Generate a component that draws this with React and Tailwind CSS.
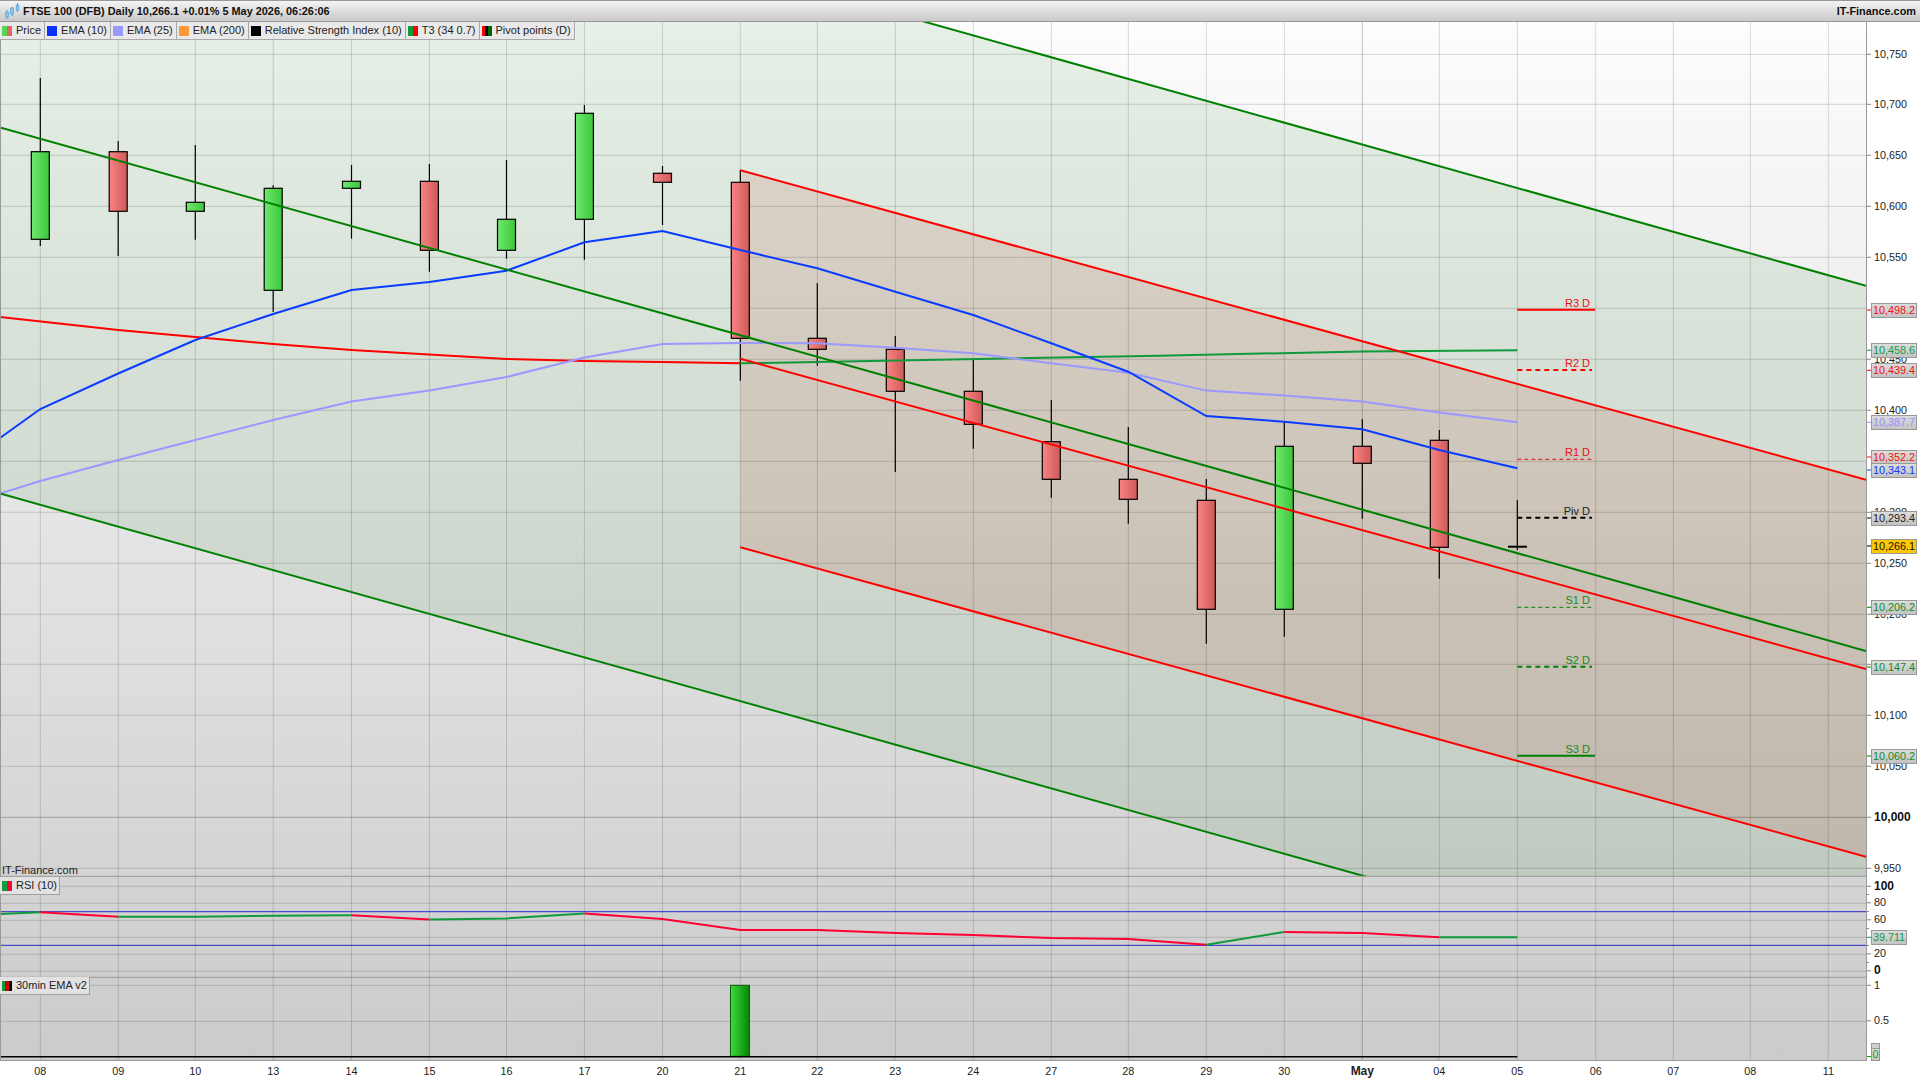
const DAYS = [
  ["08", 40.3], ["09", 118.2], ["10", 195.3], ["13", 273.2], ["14", 351.5], ["15", 429.4], ["16", 506.5], ["17", 584.4],
  ["20", 662.5], ["21", 740.3], ["22", 817.3], ["23", 895.3], ["24", 973.3], ["27", 1051.3], ["28", 1128.3], ["29", 1206.3],
  ["30", 1284.3], ["May", 1362.3], ["04", 1439.3], ["05", 1517.3], ["06", 1595.7], ["07", 1673.3], ["08", 1750.3], ["11", 1828.3],
];

// x, wick top, wick bottom, body top, body bottom, up?
const CANDLES = [
  [40.3, 78, 246, 151.7, 239.3, true],
  [118.2, 141, 256, 151.7, 211.3, false],
  [195.3, 145, 239.7, 202.3, 211.3, true],
  [273.2, 185.3, 312, 188.3, 290.3, true],
  [351.5, 165, 238.7, 181.3, 188.3, true],
  [429.4, 164, 271.7, 181.3, 250.3, false],
  [506.5, 160, 258.7, 219.3, 250.3, true],
  [584.4, 105, 259.7, 113.3, 219.3, true],
  [662.5, 166, 225, 173.3, 182.3, false],
  [740.3, 170, 380.7, 182.3, 338.3, false],
  [817.3, 283, 365.7, 338.3, 349.3, false],
  [895.3, 336, 472, 349.3, 391.3, false],
  [973.3, 359.3, 448.7, 391.3, 424.3, false],
  [1051.3, 400, 497.7, 441.7, 479.3, false],
  [1128.3, 427, 523.7, 479.3, 499.3, false],
  [1206.3, 479, 643.7, 500.3, 609.3, false],
  [1284.3, 421.7, 636.7, 446.3, 609.3, true],
  [1362.3, 419, 518.7, 446.3, 463.3, false],
  [1439.3, 430, 578.7, 440.3, 547.3, false],
];

const EMA10 = "0,438 40.3,409 118.2,373.5 195.3,340 273.2,314 351.5,290 429.4,282 506.5,270.7 584.4,242.3 662.5,231 740.3,250 817.3,268.3 895.3,291.7 973.3,315 1051.3,343.3 1128.3,371.7 1206.3,416 1284.3,421.7 1362.3,429.3 1439.3,450 1517.3,468.3";
const EMA25 = "0,493.5 40.3,481 118.2,460 195.3,440 273.2,420 351.5,401.6 429.4,390.6 506.5,377 584.4,357.5 662.5,344 740.3,343 817.3,343.3 895.3,347.7 973.3,353.3 1051.3,363.3 1128.3,372.7 1206.3,390.6 1284.3,395.5 1362.3,401.6 1439.3,412.6 1517.3,422.3";
const T3_RED = "0,317 118.2,330 273.2,344 351.5,350 506.5,359 584.4,361 662.5,362 740.3,363.3";
const T3_GREEN = "740.3,363.3 817.3,362 1160,355.7 1362.3,351.5 1517.3,350.3";

const RSI_PARTS = [
  ["#0f9a3c", "0,914 40.3,912.3"],
  ["#ff0033", "40.3,912.3 118.2,916.7"],
  ["#0f9a3c", "118.2,916.7 195.3,916.7 273.2,915.7 351.5,915.3"],
  ["#ff0033", "351.5,915.3 429.4,919.6"],
  ["#0f9a3c", "429.4,919.6 506.5,918.4 584.4,913.5"],
  ["#ff0033", "584.4,913.5 662.5,919 740.3,930 817.3,930 895.3,933 973.3,935 1051.3,938 1128.3,939 1206.3,944.7"],
  ["#0f9a3c", "1206.3,944.7 1284.3,932"],
  ["#ff0033", "1284.3,932 1362.3,933 1439.3,937.3"],
  ["#0f9a3c", "1439.3,937.3 1517.3,937.3"],
];

const H_GRID = [54.3, 104.3, 155.3, 206.3, 257.3, 308.3, 359.3, 410.3, 461.3, 512.3, 563.3, 614.3, 664.3, 715.3, 766.3, 868.3, 886.3, 903.3, 920.3, 937.3, 954.3, 971.3, 985.3, 1021.3];

const PIVOTS = [
  { name: "R3 D", y: 309.7, color: "#ff0000", sw: 2, dash: "", text: "text-[#e81010]", x2: 1595 },
  { name: "R2 D", y: 370, color: "#ff0000", sw: 2, dash: "5 4", text: "text-[#e81010]", x2: 1592 },
  { name: "R1 D", y: 459.3, color: "#e01010", sw: 1, dash: "4 3", text: "text-[#e81010]", x2: 1592 },
  { name: "Piv D", y: 517.7, color: "#000000", sw: 2, dash: "5 4", text: "text-[#222222]", x2: 1592 },
  { name: "S1 D", y: 607.3, color: "#008000", sw: 1, dash: "4 3", text: "text-[#1a8a1a]", x2: 1592 },
  { name: "S2 D", y: 666.7, color: "#008000", sw: 2, dash: "5 4", text: "text-[#1a8a1a]", x2: 1592 },
  { name: "S3 D", y: 755.7, color: "#008000", sw: 2, dash: "", text: "text-[#1a8a1a]", x2: 1595 },
];

const AXIS = [
  ["10,750", 53.5], ["10,700", 103.5], ["10,650", 154.5], ["10,600", 205.5], ["10,550", 256.5], ["10,450", 358.5], ["10,400", 409.5],
  ["10,300", 511.5], ["10,250", 562.5], ["10,200", 613.5], ["10,150", 663.5], ["10,100", 714.5], ["10,050", 765.5], ["9,950", 867.5],
  ["80", 902], ["60", 919], ["20", 953], ["1", 984.5], ["0.5", 1020],
];
const AXIS_BOLD = [["10,000", 816.5], ["100", 885.5], ["0", 970]];

const TAGS = [
  ["10,498.2", 310, "text-[#ee1111]", "#ff0000"],
  ["10,458.6", 350.3, "text-[#119944]", "#119944"],
  ["10,439.4", 370.3, "text-[#ee1111]", "#ff0000"],
  ["10,387.7", 422.3, "text-[#8f8fff]", "#9999ff"],
  ["10,352.2", 457, "text-[#ee1111]", "#ff0000"],
  ["10,343.1", 470, "text-[#0a3cff]", "#0a3cff"],
  ["10,293.4", 518, "text-[#222222]", "#000000"],
  ["10,206.2", 607.3, "text-[#0f8a1f]", "#008000"],
  ["10,147.4", 667, "text-[#0f8a1f]", "#008000"],
  ["10,060.2", 756, "text-[#0f8a1f]", "#008000"],
];

const LEGEND = [
  { label: "Price", colors: ["bg-[#55d655]", "bg-[#e26565]"] },
  { label: "EMA (10)", colors: ["bg-[#0a32ff]"] },
  { label: "EMA (25)", colors: ["bg-[#9999ff]"] },
  { label: "EMA (200)", colors: ["bg-[#ff9933]"] },
  { label: "Relative Strength Index (10)", colors: ["bg-[#000000]"] },
  { label: "T3 (34 0.7)", colors: ["bg-[#0f9a3c]", "bg-[#ff0000]"] },
  { label: "Pivot points (D)", colors: ["bg-[#ff0000]", "bg-[#000000]", "bg-[#006600]"] },
];

function LegendItem({ label, colors }) {
  return (
    <div className="flex h-[18px] items-center gap-[4px] border-r border-b border-[#a8a8a8] bg-[#e9e9e9] pl-[2px] pr-[3px] text-[11px]">
      <div className="flex h-[10px] w-[10px]">
        {colors.map((c) => (
          <div key={c} className={"flex-1 " + c}></div>
        ))}
      </div>
      <span>{label}</span>
    </div>
  );
}

function PanelLegend({ label, colors, className }) {
  return (
    <div className={"absolute left-0 flex h-[18px] items-center gap-[4px] border-r border-b border-[#a0a0a0] bg-[#e2e2e2] pl-[2px] pr-[2px] text-[11px] " + className}>
      <div className="flex h-[10px] w-[10px]">
        {colors.map((c) => (
          <div key={c} className={"flex-1 " + c}></div>
        ))}
      </div>
      <span>{label}</span>
    </div>
  );
}

function Logo() {
  return (
    <svg width="15" height="16" viewBox="0 0 15 16" className="ml-[5px] mr-[3px]">
      <path d="M2 7v9M7 4v9M12.500 0v9" stroke="#4aa3df" strokeWidth="1" fill="none" />
      <rect x="0.700" y="9" width="2.600" height="5" fill="#8fc6ea" stroke="#4aa3df" strokeWidth="0.700" />
      <rect x="5.700" y="5" width="2.600" height="6" fill="#8fc6ea" stroke="#4aa3df" strokeWidth="0.700" />
      <rect x="11.200" y="2" width="2.600" height="5" fill="#8fc6ea" stroke="#4aa3df" strokeWidth="0.700" />
    </svg>
  );
}

function Chart() {
  return (
    <svg className="absolute inset-0" width="1866" height="1039" viewBox="0 22 1866 1039">
      <defs>
        <linearGradient id="up">
          <stop offset="0" stopColor="#6eea6e" />
          <stop offset="1" stopColor="#3cc63c" />
        </linearGradient>
        <linearGradient id="down">
          <stop offset="0" stopColor="#fa8282" />
          <stop offset="1" stopColor="#cf5a5a" />
        </linearGradient>
        <linearGradient id="bar">
          <stop offset="0" stopColor="#3ddc3d" />
          <stop offset="1" stopColor="#058405" />
        </linearGradient>
        <clipPath id="main">
          <rect x="0" y="22" width="1866" height="854" />
        </clipPath>
      </defs>

      <g clipPath="url(#main)">
        <polygon points="0,-237.6 1866,285.8 1866,1016.9 0,493.5" fill="#006a00" fillOpacity="0.09" />
        <polygon points="740.3,170.3 1866,479.7 1866,856.7 740.3,547.3" fill="#bc483d" fillOpacity="0.15" />
      </g>

      {H_GRID.map((y) => (
        <line key={y} x1="0" x2="1866" y1={y} y2={y} stroke="#000" strokeOpacity="0.15" />
      ))}
      <line x1="0" x2="1866" y1="817.3" y2="817.3" stroke="#000" strokeOpacity="0.26" />
      {DAYS.map(([d, x]) => (
        <line key={x} x1={x} x2={x} y1="22" y2="1061" stroke="#000" strokeOpacity={d === "May" ? 0.24 : 0.15} />
      ))}

      {CANDLES.map(([x, wt, wb, bt, bb, up]) => (
        <g key={x}>
          <line x1={x} x2={x} y1={wt} y2={wb} stroke="#000" strokeWidth="1.200" />
          <rect x={x - 9} y={bt} width="18" height={bb - bt} fill={up ? "url(#up)" : "url(#down)"} stroke="#000" strokeWidth="1.200" />
        </g>
      ))}
      <line x1="1517.3" x2="1517.3" y1="500" y2="550" stroke="#000" strokeWidth="1.200" />
      <line x1="1508" x2="1527" y1="546.700" y2="546.700" stroke="#000" strokeWidth="2" />

      <polyline points={T3_RED} fill="none" stroke="#ff0000" strokeWidth="2" />
      <polyline points={T3_GREEN} fill="none" stroke="#0f9a3c" strokeWidth="2" />
      <polyline points={EMA25} fill="none" stroke="#9999ff" strokeWidth="2" />
      <polyline points={EMA10} fill="none" stroke="#0a3cff" strokeWidth="2" />

      <g clipPath="url(#main)" fill="none" strokeWidth="2">
        <line x1="0" y1="-237.6" x2="1866" y2="285.8" stroke="#008000" />
        <line x1="0" y1="127.5" x2="1866" y2="651" stroke="#008000" />
        <line x1="0" y1="493.5" x2="1866" y2="1016.9" stroke="#008000" />
        <line x1="740.3" y1="170.3" x2="1866" y2="479.7" stroke="#ff0000" />
        <line x1="740.3" y1="358.7" x2="1866" y2="669" stroke="#ff0000" />
        <line x1="740.3" y1="547.3" x2="1866" y2="856.7" stroke="#ff0000" />
      </g>

      {PIVOTS.map((p) => (
        <line key={p.name} x1="1517.3" x2={p.x2} y1={p.y} y2={p.y} stroke={p.color} strokeWidth={p.sw} strokeDasharray={p.dash || undefined} />
      ))}

      <line x1="0" x2="1866" y1="876.3" y2="876.3" stroke="#9a9a9a" />
      <line x1="0" x2="1866" y1="977.3" y2="977.3" stroke="#9a9a9a" />

      <line x1="0" x2="1866" y1="911.700" y2="911.700" stroke="#2a2ac8" strokeWidth="1" />
      <line x1="0" x2="1866" y1="945.300" y2="945.300" stroke="#2a2ac8" strokeWidth="1" />
      {RSI_PARTS.map(([color, pts]) => (
        <polyline key={pts} points={pts} fill="none" stroke={color} strokeWidth="2" />
      ))}

      <rect x="730.5" y="985.3" width="19" height="71" fill="url(#bar)" stroke="#0a5a0a" strokeWidth="1" />
      <line x1="0" x2="1517.3" y1="1056.700" y2="1056.700" stroke="#000" strokeWidth="1.500" />
      <line x1="0.500" x2="0.500" y1="22" y2="1061" stroke="#9a9a9a" />
      <line x1="0" x2="1866" y1="1060.500" y2="1060.500" stroke="#9a9a9a" />
    </svg>
  );
}

function AxisTicks() {
  const ys = [...AXIS, ...AXIS_BOLD].map((a) => a[1] + 0.8);
  const minor = [894.5, 911.5, 928.5, 945.5, 962.5];
  return (
    <svg className="absolute inset-0" width="54" height="1039" viewBox="0 22 54 1039">
      {ys.map((y) => (
        <line key={y} x1="0" x2="4" y1={y} y2={y} stroke="#888" />
      ))}
      {minor.map((y) => (
        <line key={y} x1="0" x2="2" y1={y} y2={y} stroke="#888" />
      ))}
      {TAGS.map(([v, y, , c]) => (
        <line key={v} x1="0" x2="5" y1={y} y2={y} stroke={c} />
      ))}
      <line x1="0" x2="5" y1="546" y2="546" stroke="#000" />
      <line x1="0" x2="5" y1="937.3" y2="937.3" stroke="#119944" />
      <line x1="0" x2="5" y1="1056.5" y2="1056.5" stroke="#11a011" />
    </svg>
  );
}

export default function App() {
  return (
    <div className="flex h-[1080px] w-[1920px] flex-col overflow-hidden bg-white font-['Liberation_Sans',Arial,sans-serif] text-[10.8px] text-[#222222]">
      <div className="flex h-[22px] shrink-0 items-center justify-between border-t border-b border-[#999999] bg-gradient-to-b from-[#f4f4f4] to-[#c9c9c9] pr-[4px] text-[10.9px] font-bold text-[#111111]">
        <div className="flex items-center">
          <Logo />
          <span>FTSE 100 (DFB) Daily 10,266.1 +0.01% 5 May 2026, 06:26:06</span>
        </div>
        <span>IT-Finance.com</span>
      </div>

      <div className="flex h-[1039px] shrink-0">
        <div className="relative w-[1866px] bg-gradient-to-b from-[#fdfdfd] to-[#cbcbcb]">
          <Chart />

          <div className="absolute left-0 top-0 flex">
            {LEGEND.map((item) => (
              <LegendItem key={item.label} label={item.label} colors={item.colors} />
            ))}
          </div>

          {PIVOTS.map((p) => (
            <span
              key={p.name}
              className={"absolute text-[11px] leading-[12px] " + p.text}
              style={{ right: 1866 - 1590, top: p.y - 22 - 13 }}
            >
              {p.name}
            </span>
          ))}

          <span className="absolute left-[2px] top-[842px] text-[11px] leading-[12px]">IT-Finance.com</span>
          <PanelLegend label="RSI (10)" colors={["bg-[#0f9a3c]", "bg-[#ff0033]"]} className="top-[855px]" />
          <PanelLegend label="30min EMA v2" colors={["bg-[#0f9a3c]", "bg-[#cc0000]", "bg-[#000000]"]} className="top-[955px]" />
        </div>

        <div className="relative flex-1 border-l border-[#999999]">
          <AxisTicks />
          {AXIS.map(([v, y]) => (
            <span key={v} className="absolute left-[7px] leading-[12px]" style={{ top: y - 22 - 6 }}>
              {v}
            </span>
          ))}
          {AXIS_BOLD.map(([v, y]) => (
            <span key={v} className="absolute left-[7px] text-[12px] font-bold leading-[12px] text-[#111111]" style={{ top: y - 22 - 6 }}>
              {v}
            </span>
          ))}
          {TAGS.map(([v, y, text]) => (
            <div
              key={v}
              className={"absolute left-[4px] h-[15px] w-[46px] border border-[#999999] bg-gradient-to-b from-[#dcdcdc] to-[#c4c4c4] text-center leading-[13px] " + text}
              style={{ top: y - 22 - 7.5 }}
            >
              {v}
            </div>
          ))}
          <div className="absolute left-[4px] top-[516.5px] h-[15px] w-[46px] border border-[#999999] bg-[#ffc800] text-center leading-[13px] text-[#111111]">
            10,266.1
          </div>
          <div className="absolute left-[4px] top-[908px] h-[15px] w-[36px] border border-[#999999] bg-gradient-to-b from-[#dcdcdc] to-[#c4c4c4] text-center leading-[13px] text-[#119944]">
            39.711
          </div>
          <div className="absolute left-[4px] top-[1020.500px] h-[6px] w-[9px] border border-[#999999] bg-[#d0d0d0]"></div>
          <div className="absolute left-[4px] top-[1026px] h-[13px] w-[9px] border border-[#999999] bg-gradient-to-b from-[#dcdcdc] to-[#c4c4c4] text-center leading-[11px] text-[#11a011]">
            0
          </div>
        </div>
      </div>

      <div className="relative flex-1">
        {DAYS.map(([d, x]) => (
          <span
            key={x}
            className={"absolute top-[4px] -translate-x-1/2 leading-[12px] " + (d === "May" ? "text-[12px] font-bold" : "")}
            style={{ left: x }}
          >
            {d}
          </span>
        ))}
      </div>
    </div>
  );
}
